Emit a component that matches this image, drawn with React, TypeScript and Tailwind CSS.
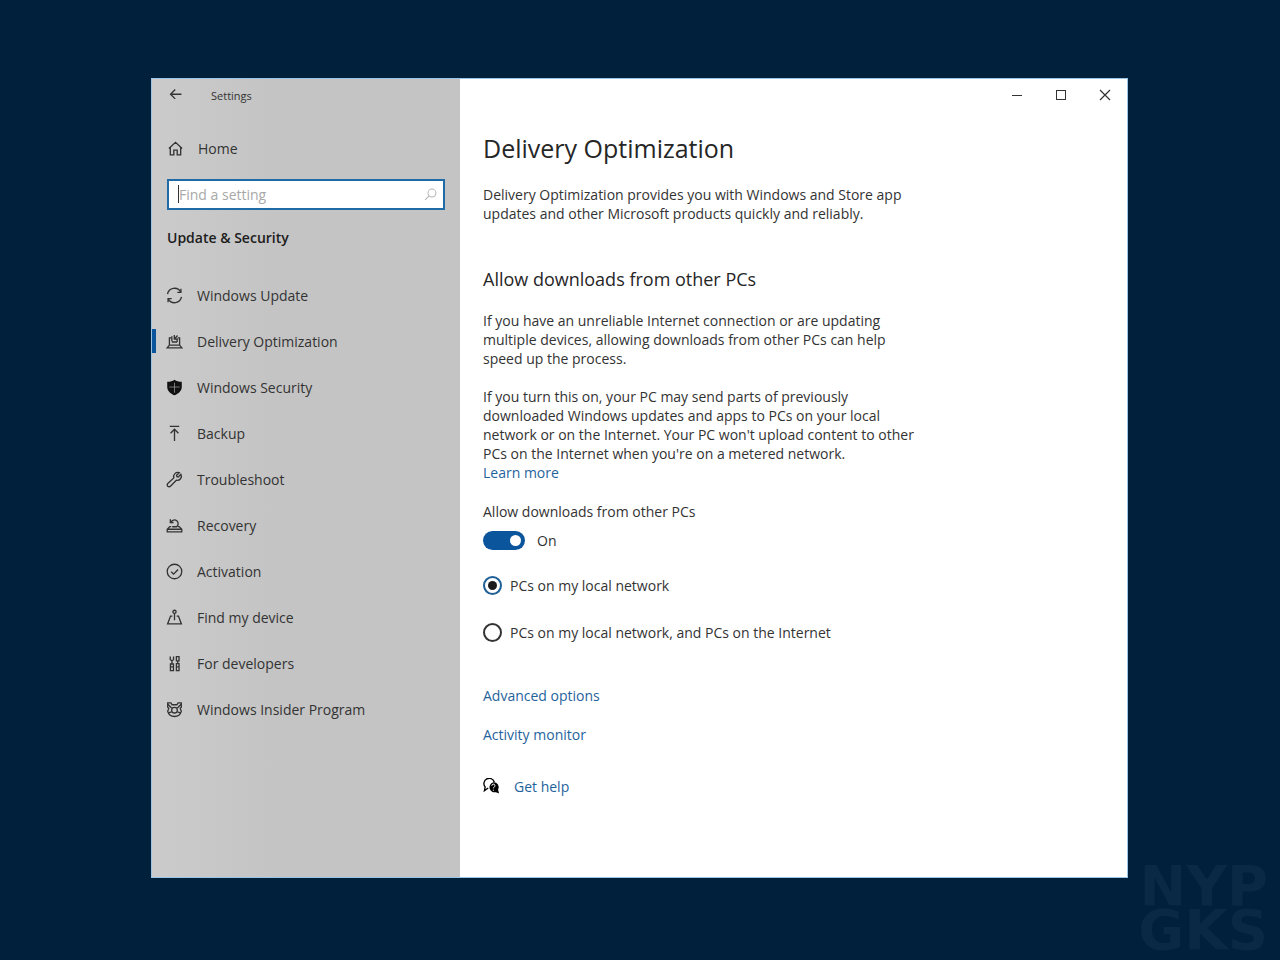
import React, { useState } from 'react';

interface IconProps {
  children: React.ReactNode;
  className?: string;
}

function Icon({ children, className = 'size-[17px]' }: IconProps) {
  return (
    <svg
      viewBox="0 0 18 18"
      fill="none"
      stroke="currentColor"
      strokeWidth="1.4"
      aria-hidden="true"
      className={`shrink-0 ${className}`}
    >
      {children}
    </svg>
  );
}

const navItems = [
  {
    label: 'Windows Update',
    icon: (
      <>
        <path d="M1.6 7.5A7.5 7.5 0 0 1 15.5 5.2M16.4 10.5A7.5 7.5 0 0 1 2.5 12.8" />
        <path d="M15.8 1.8v3.8H12M2.2 16.2v-3.8H6" />
      </>
    ),
  },
  {
    label: 'Delivery Optimization',
    icon: (
      <>
        <path d="M5.5 5.2H3.6v7.600h10.800V5.200h-1.900M3.600 12.800 1.200 15.800h15.600l-2.400-3" />
        <path d="M6.200 8.800V3.500M6.200 9.500h5.600M11.800 9.500V6" />
        <path d="M8.800 2v4.500h4M9 6.300l3.200-3.600" />
      </>
    ),
  },
  {
    label: 'Windows Security',
    icon: (
      <>
        <path
          d="M9 .8C7 2.3 4.5 3 1.3 3v5.400c0 4 3.300 7 7.700 8.900 4.400-1.900 7.700-4.900 7.700-8.900V3C13.500 3 11 2.300 9 .8Z"
          fill="#111"
          stroke="none"
        />
        <path d="M9 4v10.500M3.500 8.500h11" stroke="#999" strokeWidth=".8" />
      </>
    ),
  },
  {
    label: 'Backup',
    icon: <path d="M4 1.500h10M9 17V4.500M4.800 8.700 9 4.500l4.200 4.200" />,
  },
  {
    label: 'Troubleshoot',
    icon: (
      <path d="M15.800 3.500 13 6.300l-1.500-.3-.3-1.500L14 1.800a4.400 4.400 0 0 0-5.700 5.500L1.900 13.300a1.900 1.900 0 0 0 2.800 2.800l6.200-6.300a4.400 4.400 0 0 0 4.900-6.300Z" />
    ),
  },
  {
    label: 'Recovery',
    icon: (
      <>
        <path d="M5.500 10.200H4L1.300 13v2.800h15.400V13L14 10.200h-1.500M1.300 13h15.400" />
        <path d="M6.500 10.300h4.800a4 4 0 1 0-6-5M4.600 2.500v3.300H8" />
      </>
    ),
  },
  {
    label: 'Activation',
    icon: (
      <>
        <circle cx="9" cy="9" r="7.700" />
        <path d="m5.500 9.300 2.500 2.500 4.800-5" />
      </>
    ),
  },
  {
    label: 'Find my device',
    icon: (
      <>
        <circle cx="9" cy="3" r="1.700" />
        <path d="M9 5v7M6.700 7.500H4.800L1.700 15.800h14.600L13.200 7.500h-1.900" />
      </>
    ),
  },
  {
    label: 'For developers',
    icon: (
      <>
        <path d="M4.500 1.500v3.300L6.300 6.500v3M8 1.500v3.300L6.300 6.500M4.700 9.500h3.200v7H4.700zM11 1.700h2.800v4.500H11zM11 9.200h2.800v7.300H11zM12.400 6v3" />
        <path d="M11 12.500h2.800M4.700 12.500h3.200" />
      </>
    ),
  },
  {
    label: 'Windows Insider Program',
    icon: (
      <>
        <path d="M1.800 2h3.400l1.300 2h5l1.300-2h3.400v4.500l-1.200 1.200 1.200 3.300c-1 3.600-3.800 5.400-7.200 5.400S2.800 14.600 1.800 11L3 7.700 1.800 6.500Z" />
        <circle cx="9" cy="9.700" r="3" />
        <path d="m2 3.500 4 4M16 3.500l-4 4M2.500 12.500 6 11.500M15.500 12.500 12 11.500" />
      </>
    ),
  },
];

function Sidebar() {
  return (
    <aside className="w-[308px] shrink-0 bg-linear-to-r from-[#cbcbcb] to-[#c4c4c4] to-40%">
      <div className="flex h-8 items-center">
        <button type="button" aria-label="Back" className="flex w-12 justify-center">
          <Icon className="size-[14px]">
            <path d="M16 8h-14M8 2 2 8 8 14" strokeWidth="1.700" />
          </Icon>
        </button>
        <span className="ml-[11px] text-[11px]">Settings</span>
      </div>

      <a href="#home" className="mt-[21px] flex h-8 items-center gap-[14px] pl-[15px]">
        <Icon>
          <path d="m2 9 7-6.500L16 9M3.500 7.800v8h3.700v-5h3.600v5h3.700v-8" />
        </Icon>
        Home
      </a>

      <div className="relative mt-[15px] mr-[15px] ml-[15px]">
        <input
          type="text"
          aria-label="Find a setting"
          placeholder="Find a setting"
          className="block h-[31px] w-full border-2 border-[#1e6ba6] bg-white pr-8 pl-[10px] outline-none placeholder:text-[#a8a8a8]"
        />
        <span className="absolute top-[6px] left-[11px] h-[18px] w-px bg-[#333]" />
        <Icon className="absolute top-[9px] right-2 size-[13px] text-[#b5b5b5]">
          <circle cx="11" cy="7" r="5.500" />
          <path d="m7 11-5.500 5.500" />
        </Icon>
      </div>

      <h2 className="mt-[18px] pl-[15px] leading-5 font-semibold text-[#1c1c1c]">Update &amp; Security</h2>

      <nav className="mt-6">
        {navItems.map((item) => {
          const active = item.label === 'Delivery Optimization';
          return (
            <a
              key={item.label}
              href="#settings"
              aria-current={active ? 'page' : undefined}
              className="flex h-[46px] items-center"
            >
              <span className={`h-6 w-1 ${active ? 'bg-[#0a559c]' : ''}`} />
              <span className="flex items-center gap-[14px] pl-[10px]">
                <Icon>{item.icon}</Icon>
                {item.label}
              </span>
            </a>
          );
        })}
      </nav>
    </aside>
  );
}

function WindowControls() {
  return (
    <div className="flex h-8 justify-end text-[#333]">
      <button type="button" aria-label="Minimize" className="flex w-11 items-center justify-center">
        <span className="h-px w-[10px] bg-current" />
      </button>
      <button type="button" aria-label="Maximize" className="flex w-11 items-center justify-center">
        <span className="size-[10px] border border-current" />
      </button>
      <button type="button" aria-label="Close" className="flex w-11 items-center justify-center">
        <Icon className="size-3">
          <path d="m1.500 1.500 15 15M16.500 1.500l-15 15" strokeWidth="1.800" />
        </Icon>
      </button>
    </div>
  );
}

const sources = [
  { value: 'local', label: 'PCs on my local network' },
  { value: 'internet', label: 'PCs on my local network, and PCs on the Internet' },
];

function DeliveryOptimization() {
  const [enabled, setEnabled] = useState(true);
  const [source, setSource] = useState('local');

  return (
    <div className="pr-6 pl-[23px]">
      <h1 className="mt-5 text-[25px] leading-[34px] text-[#262626]">Delivery Optimization</h1>
      <p className="mt-5 max-w-[436px]">
        Delivery Optimization provides you with Windows and Store app updates and other Microsoft products quickly
        and reliably.
      </p>

      <h2 className="mt-11 text-lg leading-6 text-[#262626]">Allow downloads from other PCs</h2>
      <p className="mt-5 max-w-[436px]">
        If you have an unreliable Internet connection or are updating multiple devices, allowing downloads from
        other PCs can help speed up the process.
      </p>
      <p className="mt-[19px] max-w-[436px]">
        If you turn this on, your PC may send parts of previously downloaded Windows updates and apps to PCs on
        your local network or on the Internet. Your PC won't upload content to other PCs on the Internet when
        you're on a metered network.
      </p>
      <a href="#learn-more" className="block w-fit text-[#1f639c]">
        Learn more
      </a>

      <p id="allow-label" className="mt-5">
        Allow downloads from other PCs
      </p>
      <div className="mt-[10px] flex items-center gap-3">
        <button
          type="button"
          role="switch"
          aria-checked={enabled}
          aria-labelledby="allow-label"
          onClick={() => setEnabled(!enabled)}
          className={`flex h-[19px] w-[42px] items-center rounded-full px-1 ${
            enabled ? 'justify-end bg-[#0a559c]' : 'justify-start bg-[#777]'
          }`}
        >
          <span className="size-[11px] rounded-full bg-white" />
        </button>
        <span>{enabled ? 'On' : 'Off'}</span>
      </div>

      <div className="mt-[25px] flex flex-col gap-[27px]">
        {sources.map((s) => (
          <label key={s.value} className="flex h-5 items-center gap-2">
            <span className="grid place-items-center">
              <input
                type="radio"
                name="source"
                value={s.value}
                checked={source === s.value}
                onChange={() => setSource(s.value)}
                className="peer col-start-1 row-start-1 size-[19px] appearance-none rounded-full border-2 border-[#333] bg-white checked:border-[#1e5f96]"
              />
              <span className="pointer-events-none col-start-1 row-start-1 hidden size-[9px] rounded-full bg-[#1c1c1c] peer-checked:block" />
            </span>
            {s.label}
          </label>
        ))}
      </div>

      <div className="mt-[44px] flex flex-col items-start gap-5 text-[#1f639c]">
        <a href="#advanced">Advanced options</a>
        <a href="#activity">Activity monitor</a>
      </div>
      <a href="#help" className="mt-[33px] flex w-fit items-center gap-[14px] text-[#1f639c]">
        <Icon className="size-[17px] text-black">
          <path d="M5.500 10.500 1.500 13.500l.8-4A5.600 5.600 0 1 1 12 4.500" />
          <path
            d="M10.800 4.500a5.400 5.400 0 0 1 5.200 8l1 4-3.300-1.500a5.400 5.400 0 1 1-2.900-10.500Z"
            fill="currentColor"
            stroke="none"
          />
          <path d="M9.300 8.200a1.700 1.700 0 1 1 2.400 1.500c-.5.300-.7.600-.7 1.200M11 12.300v1.200" stroke="#fff" strokeWidth="1" />
        </Icon>
        Get help
      </a>
    </div>
  );
}

export default function App() {
  return (
    <div className="relative flex min-h-screen bg-[#00203c] pt-[78px] pr-[152px] pb-[82px] pl-[151px] font-['Open_Sans','Noto_Sans',sans-serif] text-sm leading-[19px] text-[#333]">
      <div className="flex flex-1 border border-[#9cc4e4] bg-white">
        <Sidebar />
        <main className="min-w-0 flex-1">
          <WindowControls />
          <DeliveryOptimization />
        </main>
      </div>
      <div
        aria-hidden="true"
        className="absolute right-3 bottom-2 text-right font-['DejaVu_Sans',sans-serif] text-[56px] leading-[44px] font-bold text-[#0a2944]"
      >
        NYP
        <br />
        GKS
      </div>
    </div>
  );
}
